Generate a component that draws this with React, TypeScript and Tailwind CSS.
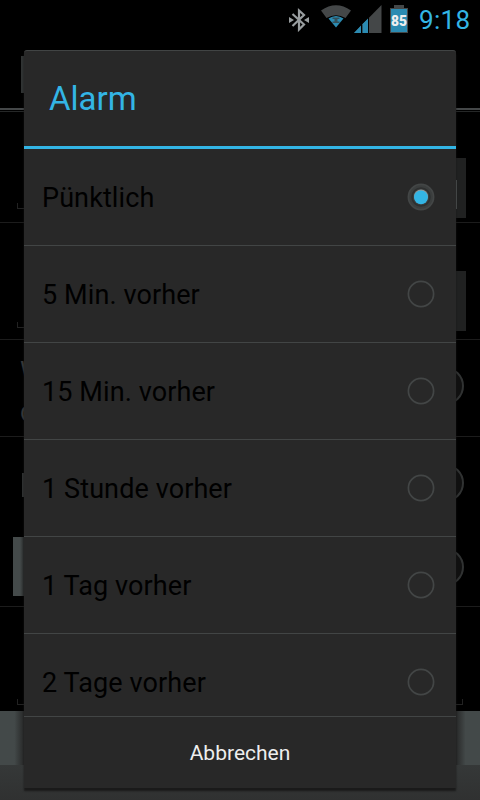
import React, { useState } from 'react';

const options = [
  'Pünktlich',
  '5 Min. vorher',
  '15 Min. vorher',
  '1 Stunde vorher',
  '1 Tag vorher',
  '2 Tage vorher',
];

function StatusBar() {
  return (
    <header className="flex h-[38px] shrink-0 items-start justify-end bg-black">
      {/* Bluetooth */}
      <svg className="mt-2 mr-3 h-6 w-5" viewBox="0 0 20 24" fill="none" stroke="#989d9f" strokeWidth="2.2">
        <path d="M3.500 6 15 16.500 10 21.500V2.500L15 7 3.500 18" />
        <path d="M0 9 5 12 0 15zM20 9 15 12l5 3z" fill="#989d9f" stroke="none" />
      </svg>
      {/* Wifi */}
      <svg className="mt-[5px] mr-[3px] h-[23px] w-[30px]" viewBox="0 0 30 23">
        <path d="M0 5.500Q15-5 30 5.500L24.500 13Q15 7.500 5.500 13z" fill="#444748" />
        <path d="M7.500 13.500Q15 8.500 22.500 13.500L15 22.500z" fill="#2b8bb2" />
        <path d="M11.500 12.500h7v1.500h-2v2.500h2V18h-7v-1.500h2V14h-2z" fill="#34505a" />
      </svg>
      {/* Signal */}
      <svg className="mt-[5px] mr-2 h-7 w-7" viewBox="0 0 28 28">
        <path d="M0 28 27.500 0v28z" fill="#444748" />
        <path d="M0 28 7 20.500V28zM8.500 28v-9l5.500-5.600V28z" fill="#2b8bb2" />
        <path d="M7 20h1.200v8H7zM14 12.500h1v15.500h-1z" fill="#000" />
      </svg>
      {/* Battery */}
      <svg className="mt-[5px] mr-[11px] h-7 w-[18px]" viewBox="0 0 18 28">
        <path d="M4 0h10v3h4v25H0V3h4z" fill="#444748" />
        <path d="M1 4h16v23H1z" fill="#2b8bb2" />
        <text
          x="9"
          y="21"
          textAnchor="middle"
          fill="#eee"
          fontFamily="Roboto, sans-serif"
          fontSize="14"
          fontWeight="900"
          textLength="16"
          lengthAdjust="spacingAndGlyphs"
        >
          85
        </text>
      </svg>
      <span className="mt-1 mr-[9px] w-[52px] whitespace-nowrap text-[26px] leading-8 tracking-[0.3px] text-[#33b5e5]">
        9:18
      </span>
    </header>
  );
}

function Corner({ side }: { side: 'left' | 'right' }) {
  return (
    <i
      className={`block h-[6px] w-[10px] border-b border-[#222] ${
        side === 'left' ? 'ml-[17px] border-l' : 'mr-[17px] border-r'
      }`}
    />
  );
}

function DimRadio() {
  return <i className="mr-4 block size-[38px] rounded-full border-2 border-[#303232] bg-[#101010]" />;
}

// The event form, dimmed behind the dialog
function EventForm() {
  return (
    <div className="flex grow flex-col text-[27px] leading-[40px] text-[#383838]">
      <div className="flex h-[70px] items-start pt-[18px] pl-[21px]">
        <i className="block h-[37px] w-4 bg-[#303333]" />
      </div>
      <div className="h-1 border-t-2 border-b border-t-[#444748] border-b-[#252727]" />
      <div className="flex h-[111px] justify-between border-b border-[#1c1c1c]">
        <div className="pt-[91px]"><Corner side="left" /></div>
        <div className="mt-[46px] mr-[14px] flex h-[60px] w-5 bg-[#202121]">
          <i className="mt-[22px] ml-[10px] block h-[29px] w-px bg-[#535858]" />
        </div>
      </div>
      <div className="flex h-[117px] justify-between border-b border-[#1c1c1c]">
        <div className="pt-[99px]"><Corner side="left" /></div>
        <i className="mt-12 mr-[14px] block h-[60px] w-5 bg-[#202121]" />
      </div>
      <div className="flex h-[97px] items-start justify-between border-b border-[#1c1c1c] pl-5">
        <div className="pt-3">W<br />d</div>
        <div className="pt-[27px]"><DimRadio /></div>
      </div>
      <div className="flex h-[96px] items-start justify-between pl-[22px]">
        <i className="mt-9 block h-6 w-3 border-l-2 border-[#303232]" />
        <div className="pt-[27px]"><DimRadio /></div>
      </div>
      <div className="flex h-[74px] items-start justify-between border-b border-[#1c1c1c] pl-[13px]">
        <i className="mt-1 block h-[59px] w-[14px] bg-linear-to-r from-[#444a4a] from-50% to-[#292b2b] to-80%" />
        <div className="pt-[15px]"><DimRadio /></div>
      </div>
      <div className="flex h-[104px] items-start justify-between pt-[92px]">
        <Corner side="left" />
        <Corner side="right" />
      </div>
      <div className="flex grow flex-col">
        <div className="flex h-[54px] justify-between bg-[#3f4545]">
          <i className="block h-full w-6 bg-linear-to-r from-[#434949] from-60% to-[#282929]" />
          <i className="block h-full w-6 bg-linear-to-l from-[#434949] from-60% to-[#282929]" />
        </div>
        <div className="grow bg-linear-to-b from-[#353838] to-[#303131]" />
      </div>
    </div>
  );
}

function Radio({ checked }: { checked: boolean }) {
  return (
    <svg className="size-7 shrink-0" viewBox="0 0 28 28" fill="none">
      <circle cx="14" cy="14" r="12.600" stroke="#434646" strokeWidth="1.700" fill={checked ? '#3b3e3e' : 'none'} />
      {checked && (
        <>
          <circle cx="14" cy="14" r="9" stroke="#2e3030" strokeWidth="1.500" />
          <circle cx="14" cy="13.500" r="7" fill="#929899" />
          <circle cx="14" cy="14.300" r="6.900" fill="#33b5e5" />
        </>
      )}
    </svg>
  );
}

export default function App() {
  const [selected, setSelected] = useState(0);

  return (
    <div className="relative flex h-[800px] w-[480px] flex-col overflow-hidden bg-black font-['Roboto',sans-serif]">
      <StatusBar />
      <EventForm />

      {/* Alarm dialog */}
      <div
        role="dialog"
        className="absolute top-[50px] left-6 flex h-[738px] w-[432px] flex-col rounded-t-[3px] border-t border-[#414444] bg-[#282828] shadow-[0_3px_2px_#1a1a1a]"
      >
        <h1 className="h-[98px] shrink-0 border-b-3 border-[#33b5e5] pt-[26px] pl-[25px] text-[33px] leading-[44px] text-[#33b5e5]">
          Alarm
        </h1>
        <div className="h-[567px] shrink-0 overflow-hidden">
          {options.map((label, i) => (
            <button
              key={label}
              onClick={() => setSelected(i)}
              className="flex h-[97px] w-full items-center justify-between border-b border-[#424545] pr-[21px] pl-[18px] text-left text-[27px] tracking-[0.1px] text-black"
            >
              <span className="pt-[2px]">{label}</span>
              <Radio checked={selected === i} />
            </button>
          ))}
        </div>
        <button className="grow border-t border-[#424545] pt-[2px] text-[21px] text-[#eee]">Abbrechen</button>
      </div>
    </div>
  );
}
